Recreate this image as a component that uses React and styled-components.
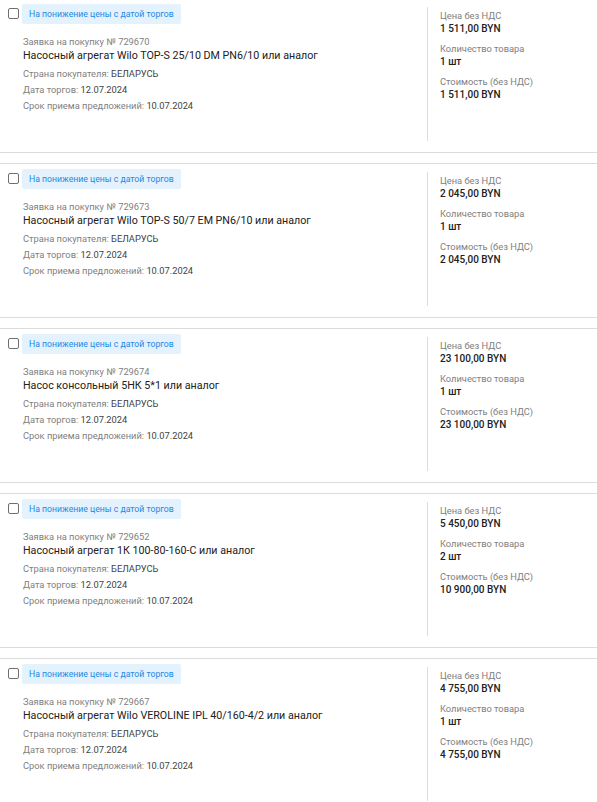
import React from "react"
import styled, { createGlobalStyle } from "styled-components"

const GlobalStyle = createGlobalStyle`
  body {
    margin: 0;
    background: #fff;
    font-family: Roboto, "Noto Sans", sans-serif;
  }
`

const List = styled.div`
  margin-top: -2px;
`

const Card = styled.div`
  display: flex;
  border-top: 1px solid #dcdcdc;
  border-bottom: 1px solid #dcdcdc;
  margin-bottom: 10px;
`

const Main = styled.div`
  flex: 1;
  padding: 5px 0 0 8px;
`

const Header = styled.div`
  display: flex;
  align-items: center;
  height: 20px;
`

const Check = styled.input.attrs({ type: "checkbox" })`
  appearance: none;
  margin: 0 3px 0 0;
  width: 11px;
  height: 11px;
  border: 1px solid #6f6f6f;
  border-radius: 2px;
  box-sizing: border-box;
  position: relative;
  top: -1px;
`

const Badge = styled.span`
  display: inline-flex;
  align-items: center;
  height: 20px;
  padding: 0 7px;
  background: #e3f2fd;
  color: #1e88e5;
  font-size: 8.7px;
  border-radius: 2px;
`

const Body = styled.div`
  padding: 11px 0 0 15px;
`

const Number = styled.div`
  font-size: 9.3px;
  line-height: 13px;
  color: #808080;
`

const Title = styled.div`
  font-size: 10.7px;
  line-height: 16px;
  color: #212121;
  margin-bottom: 2px;
`

const Row = styled.div`
  font-size: 9.3px;
  line-height: 16px;
  color: #808080;

  b {
    font-weight: 400;
    color: #424242;
  }
`

const Side = styled.div`
  width: 157px;
  height: 132px;
  margin: 8px 0 11px;
  padding: 2px 0 0 12px;
  border-left: 1px solid #dcdcdc;
  display: flex;
  flex-direction: column;
  gap: 6px;
`

const Field = styled.div`
  font-size: 9.3px;
  color: #808080;
  line-height: 13px;

  div {
    color: #212121;
    font-size: 10px;
    font-weight: 500;
    line-height: 14px;
  }
`

const items = [
  { num: "729670", title: "Насосный агрегат Wilo TOP-S 25/10 DM PN6/10 или аналог", price: "1 511,00 BYN", qty: "1 шт", total: "1 511,00 BYN" },
  { num: "729673", title: "Насосный агрегат Wilo TOP-S 50/7 EM PN6/10 или аналог", price: "2 045,00 BYN", qty: "1 шт", total: "2 045,00 BYN" },
  { num: "729674", title: "Насос консольный 5НК 5*1 или аналог", price: "23 100,00 BYN", qty: "1 шт", total: "23 100,00 BYN" },
  { num: "729652", title: "Насосный агрегат 1К 100-80-160-С или аналог", price: "5 450,00 BYN", qty: "2 шт", total: "10 900,00 BYN" },
  { num: "729667", title: "Насосный агрегат Wilo VEROLINE IPL 40/160-4/2 или аналог", price: "4 755,00 BYN", qty: "1 шт", total: "4 755,00 BYN" },
]

export default function App() {
  return (
    <>
      <GlobalStyle />
      <List>
        {items.map((item) => (
          <Card key={item.num}>
            <Main>
              <Header>
                <Check />
                <Badge>На понижение цены с датой торгов</Badge>
              </Header>
              <Body>
                <Number>Заявка на покупку № {item.num}</Number>
                <Title>{item.title}</Title>
                <Row>
                  Страна покупателя: <b>БЕЛАРУСЬ</b>
                </Row>
                <Row>
                  Дата торгов: <b>12.07.2024</b>
                </Row>
                <Row>
                  Срок приема предложений: <b>10.07.2024</b>
                </Row>
              </Body>
            </Main>
            <Side>
              <Field>
                Цена без НДС
                <div>{item.price}</div>
              </Field>
              <Field>
                Количество товара
                <div>{item.qty}</div>
              </Field>
              <Field>
                Стоимость (без НДС)
                <div>{item.total}</div>
              </Field>
            </Side>
          </Card>
        ))}
      </List>
    </>
  )
}
